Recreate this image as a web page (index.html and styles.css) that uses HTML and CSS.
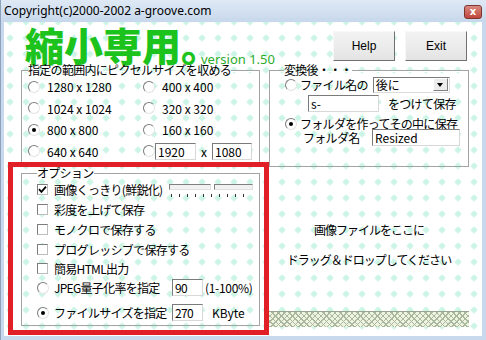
FILE: index.html
```html
<!DOCTYPE html>
<html lang="ja">
<head>
    <meta charset="UTF-8">
    <meta name="viewport" content="width=device-width, initial-scale=1.0">
    <title>縮小専用</title>
    <link rel="stylesheet" href="styles.css">
</head>
<body>
    <div class="window">
        <div class="titlebar">
            <span class="title">Copyright(c)2000-2002 a-groove.com</span>
            <span class="close">x</span>
        </div>

        <div class="client">
            <div class="header">
                <div class="logo">縮小専用。<span class="version">version 1.50</span></div>
                <div class="buttons">
                    <button class="btn">Help</button>
                    <button class="btn">Exit</button>
                </div>
            </div>

            <div class="settings">
                <fieldset class="group size-group">
                    <legend>指定の範囲内にピクセルサイズを収める</legend>
                    <div class="size-grid">
                        <div class="opt"><span class="radio"></span>1280 x 1280</div>
                        <div class="opt"><span class="radio"></span>400 x 400</div>
                        <div class="opt"><span class="radio"></span>1024 x 1024</div>
                        <div class="opt"><span class="radio"></span>320 x 320</div>
                        <div class="opt"><span class="radio on"></span>800 x 800</div>
                        <div class="opt"><span class="radio"></span>160 x 160</div>
                        <div class="opt"><span class="radio"></span>640 x 640</div>
                        <div class="opt custom">
                            <span class="radio"></span>
                            <span class="field w41">1920</span>
                            <span class="times">x</span>
                            <span class="field w40">1080</span>
                        </div>
                    </div>
                </fieldset>

                <fieldset class="group out-group">
                    <legend>変換後・・・</legend>
                    <div class="row r1">
                        <span class="radio"></span>
                        <span class="label">ファイル名の</span>
                        <span class="select">後に<span class="drop-btn"></span></span>
                    </div>
                    <div class="row r2">
                        <span class="field w71">s-</span>
                        <span class="label">をつけて保存</span>
                    </div>
                    <div class="row r3">
                        <span class="radio on"></span>
                        <span class="label">フォルダを作ってその中に保存</span>
                    </div>
                    <div class="row r4">
                        <span class="label">フォルダ名</span>
                        <span class="field w88">Resized</span>
                    </div>
                </fieldset>
            </div>

            <div class="lower">
                <fieldset class="group opt-group">
                    <legend>オプション</legend>
                    <div class="check-row">
                        <span class="check on">
                            <svg width="9" height="9" viewBox="0 0 9 9"><path d="M1 4.2 L3.4 6.8 L8 1.6" fill="none" stroke="#000" stroke-width="1.8"/></svg>
                        </span>
                        <span>画像くっきり(鮮鋭化)</span>
                        <span class="slider">
                            <span class="track"><span class="part a"></span><span class="part b"></span></span>
                            <span class="ticks"></span>
                        </span>
                    </div>
                    <div class="check-row"><span class="check"></span><span>彩度を上げて保存</span></div>
                    <div class="check-row"><span class="check"></span><span>モノクロで保存する</span></div>
                    <div class="check-row"><span class="check"></span><span>プログレッシブで保存する</span></div>
                    <div class="check-row"><span class="check"></span><span>簡易HTML出力</span></div>
                    <div class="radio-row">
                        <span class="radio"></span>
                        <span class="opt-label">JPEG量子化率を指定</span>
                        <span class="field w31">90</span>
                        <span class="suffix">(1-100%)</span>
                    </div>
                    <div class="radio-row second">
                        <span class="radio on"></span>
                        <span class="opt-label">ファイルサイズを指定</span>
                        <span class="field w31">270</span>
                        <span class="suffix kb">KByte</span>
                    </div>
                </fieldset>

                <div class="drop">
                    <p class="drop-line first">画像ファイルをここに</p>
                    <p class="drop-line">ドラッグ＆ドロップしてください</p>
                    <div class="hatch"></div>
                </div>
            </div>

            <div class="highlight"></div>
        </div>
    </div>
</body>
</html>
```

FILE: styles.css
```css
*{
    box-sizing: border-box;
}
body{
    margin: 0;
    font-family: "Noto Sans CJK JP", sans-serif;
    font-size: 12px;
    color: #000;
}
.window{
    width: 486px;
    height: 340px;
    display: flex;
    flex-direction: column;
    padding: 0 4px 4px 3px;
    background: #c8d9ed;
    border-left: 1px solid #8da2bb;
}
.titlebar{
    height: 23px;
    margin: 0 -4px 0 -3px;
    padding: 0 4px 0 3px;
    display: flex;
    align-items: center;
    justify-content: space-between;
    background: linear-gradient(#dfe9f5, #c7d8ec);
}
.title{
    font-family: "Noto Sans", sans-serif;
    font-size: 12px;
    line-height: 14px;
}
.close{
    width: 18px;
    height: 14px;
    margin-top: 1px;
    border: 1px solid #7d3530;
    border-radius: 3px;
    background: linear-gradient(#d98a80, #c0463c);
    color: #fff;
    font-family: "DejaVu Sans", sans-serif;
    font-weight: bold;
    font-size: 10px;
    line-height: 11px;
    text-align: center;
}

/* client area with the diamond pattern */
.client{
    flex: 1;
    position: relative;
    background-color: #fff;
    background-image:
        linear-gradient(45deg, #cdf5e6 9%, transparent 14%),
        linear-gradient(135deg, #cdf5e6 9%, transparent 14%),
        linear-gradient(225deg, #cdf5e6 9%, transparent 14%),
        linear-gradient(315deg, #cdf5e6 9%, transparent 14%);
    background-size: 16px 16px;
    background-position: 6px 0;
}
.header{
    height: 42px;
    display: flex;
    align-items: flex-start;
    padding: 0 15px 0 21px;
}
.logo{
    padding-top: 3px;
    font-size: 39px;
    line-height: 38px;
    font-weight: 900;
    color: #1dc31d;
    white-space: nowrap;
}
.version{
    margin-left: -19px;
    font-family: "Noto Sans", sans-serif;
    font-size: 13px;
    line-height: 13px;
    font-weight: normal;
    color: #2aab2a;
    vertical-align: -3px;
}
.buttons{
    margin-left: auto;
    margin-top: 9px;
    display: flex;
    gap: 10px;
}
.btn{
    width: 62px;
    height: 30px;
    padding: 0;
    border: 1px solid;
    border-color: #f8f8f8 #707070 #707070 #f8f8f8;
    background: linear-gradient(#f3f3f3, #e4e4e4);
    font-family: "Liberation Sans", sans-serif;
    font-size: 12px;
    color: #000;
}

/* group boxes */
.group{
    margin: 0;
    padding: 0 6px;
    min-width: 0;
    border: 1px solid #a3a3a3;
    box-shadow: inset 1px 1px #fff;
    white-space: nowrap;
}
.group legend{
    padding: 0;
    line-height: 12px;
    letter-spacing: -0.7px;
}
.settings{
    height: 103px;
    display: flex;
    gap: 9px;
    padding-left: 17px;
}
.size-group{
    width: 239px;
    height: 103px;
}
.size-grid{
    display: grid;
    grid-template-columns: 115px 1fr;
    grid-auto-rows: 21.5px;
}
.opt{
    display: flex;
    align-items: center;
    gap: 7px;
}
.opt.custom{
    gap: 0;
}
.times{
    width: 16px;
    text-align: center;
}
.out-group{
    width: 200px;
    height: 103px;
    padding: 0 0 0 15px;
}
.out-group legend{
    margin-left: -1px;
}
.row{
    display: flex;
    align-items: center;
    line-height: 12px;
}
.r1{
    height: 17px;
}
.r2{
    height: 17px;
    margin-top: 2px;
    padding-left: 23px;
}
.r3{
    height: 12px;
    margin-top: 6px;
}
.r4{
    height: 17px;
    margin-top: -1px;
    padding-left: 18px;
}
.row .label{
    letter-spacing: -0.7px;
}
.r1 .label, .r3 .label{
    margin-left: 3px;
}
.r2 .label{
    margin-left: 9px;
}
.r4 .label{
    width: 69px;
}
.select{
    width: 77px;
    height: 16px;
    margin-left: 5px;
    display: flex;
    align-items: center;
    padding-left: 2px;
    border: 1px solid;
    border-color: #7b7b7b #dcdcdc #dcdcdc #7b7b7b;
    background: #fff;
    line-height: 14px;
}
.drop-btn{
    width: 15px;
    height: 13px;
    margin-left: auto;
    margin-right: 1px;
    border: 1px solid;
    border-color: #fff #808080 #808080 #fff;
    background: #ececec;
    display: flex;
    align-items: center;
    justify-content: center;
}
.drop-btn::after{
    content: "";
    border-left: 3.5px solid transparent;
    border-right: 3.5px solid transparent;
    border-top: 4px solid #000;
}

/* controls */
.radio{
    width: 12px;
    height: 12px;
    flex: none;
    border: 1px solid;
    border-color: #7c7c7c #e4e4e4 #e4e4e4 #7c7c7c;
    border-radius: 50%;
    background: #fff;
    display: flex;
    align-items: center;
    justify-content: center;
}
.radio.on::after{
    content: "";
    width: 4px;
    height: 4px;
    border-radius: 50%;
    background: #000;
}
.check{
    width: 11px;
    height: 11px;
    flex: none;
    border: 1px solid;
    border-color: #7c7c7c #bdbdbd #bdbdbd #7c7c7c;
    background: #fff;
    display: flex;
    align-items: center;
    justify-content: center;
}
.field{
    height: 17px;
    flex: none;
    padding-left: 2px;
    border: 1px solid;
    border-color: #7b7b7b #d8d8d8 #d8d8d8 #7b7b7b;
    background: #fff;
    line-height: 15px;
}
.w31{ width: 31px; }
.w40{ width: 40px; }
.w41{ width: 41px; }
.w71{ width: 71px; }
.w88{ width: 88px; }

/* lower half */
.lower{
    height: 169px;
    display: flex;
    gap: 9px;
    padding-left: 17px;
}
.opt-group{
    width: 239px;
    height: 159px;
    padding: 0 6px 0 15px;
}
.check-row{
    height: 19.75px;
    display: flex;
    align-items: center;
    gap: 6px;
    letter-spacing: -0.7px;
}
.check-row:first-of-type{
    margin-top: 1px;
}
.slider{
    margin-left: auto;
    width: 84px;
    display: flex;
    flex-direction: column;
    gap: 4px;
    margin-top: 1px;
}
.track{
    display: flex;
    gap: 3px;
}
.part{
    height: 6px;
    border: 1px solid;
    border-color: #808080 #e0e0e0 #e0e0e0 #808080;
    background: #f2f2f2;
}
.part.a{ width: 42px; }
.part.b{ width: 39px; }
.ticks{
    height: 3px;
    margin: 0 2px;
    background: repeating-linear-gradient(90deg, #333 0 1px, transparent 1px 8px);
}
.radio-row{
    height: 18px;
    display: flex;
    align-items: center;
    letter-spacing: -0.7px;
}
.radio-row.second{
    margin-top: 7px;
}
.opt-label{
    width: 123px;
    padding-left: 5px;
}
.suffix{
    margin-left: 2px;
    letter-spacing: -0.3px;
}
.suffix.kb{
    margin-left: 9px;
    letter-spacing: 0;
}
.drop{
    width: 200px;
    display: flex;
    flex-direction: column;
    align-items: center;
}
.drop-line{
    margin: 16px 0 0;
    line-height: 14px;
    letter-spacing: -1px;
}
.drop-line.first{
    margin-top: 56px;
}
.hatch{
    width: 100%;
    height: 16px;
    margin-top: auto;
    margin-bottom: 9px;
    border-top: 1px solid #9aa493;
    background-color: #eef3e2;
    background-image:
        repeating-linear-gradient(45deg, #a9b89c 0 1px, transparent 1px 4px),
        repeating-linear-gradient(-45deg, #a9b89c 0 1px, transparent 1px 4px);
}

/* red annotation frame over the options */
.highlight{
    position: absolute;
    left: 4px;
    top: 140px;
    width: 261px;
    height: 173px;
    border: 5px solid #e11f27;
}
```
